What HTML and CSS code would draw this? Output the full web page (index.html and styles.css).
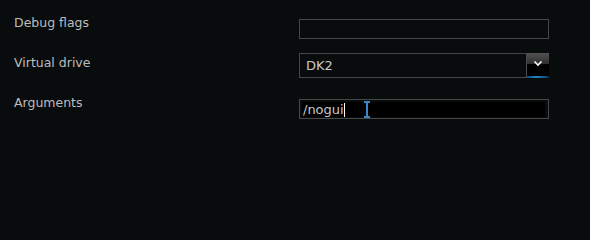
FILE: index.html
```html
<!DOCTYPE html>
<html>
<head>
<meta charset="utf-8">
<link rel="stylesheet" href="styles.css">
</head>
<body>
<div class="form">
  <div class="row">
    <div class="label">Debug flags</div>
    <div class="field input"></div>
  </div>
  <div class="row">
    <div class="label">Virtual drive</div>
    <div class="field select">
      <div class="select-value">DK2</div>
      <div class="select-btn">
        <svg class="chev" width="10" height="7" viewBox="0 0 10 7"><path d="M1.5 1.5 L5 5 L8.5 1.5" fill="none" stroke="#ffffff" stroke-width="1.6"/></svg>
      </div>
    </div>
  </div>
  <div class="row">
    <div class="label">Arguments</div>
    <div class="field input focused">
      <div class="inner"><span class="val">/nogui</span><span class="caret"></span></div>
      <span class="ibeam"></span>
    </div>
  </div>
</div>
</body>
</html>
```
FILE: styles.css
```css
html, body {
  margin: 0;
  padding: 0;
  background: #080c0c;
  width: 590px;
  height: 200px;
  overflow: hidden;
}
body {
  font-family: "DejaVu Sans", sans-serif;
  font-size: 12.5px;
  color: #bdbdbd;
}
.form {
  padding: 14px 0 0 14px;
}
.row {
  display: flex;
  align-items: flex-start;
  height: 40px;
}
.label {
  width: 285px;
  line-height: 16px;
  margin-top: 1px;
}
.field {
  box-sizing: border-box;
  width: 250px;
  border: 1px solid #474747;
  background: #080c0c;
}
.input {
  height: 20px;
  margin-top: 5px;
  position: relative;
}
.select {
  height: 25px;
  margin-top: -1px;
  display: flex;
  border-right: none;
}
.select-value {
  flex: 1;
  padding-left: 6px;
  line-height: 24px;
  font-size: 13px;
  color: #c8c8c8;
}
.select-btn {
  position: relative;
  width: 23px;
  margin: -1px 0 -1px 0;
  border-left: 1px solid #4a4a4a;
  background: linear-gradient(#525252, #2e2e2e 44%, #000000 44%, #000000 100%);
  display: flex;
  justify-content: center;
  padding-top: 7px;
  box-sizing: border-box;
}
.select-btn::after {
  content: "";
  position: absolute;
  left: 0;
  right: 0;
  bottom: 0;
  height: 2px;
  background: linear-gradient(90deg, #0e4a70, #1e86c0 40%, #0f5a88 80%, #06283c);
}
.chev {
  display: block;
}
.inner {
  position: absolute;
  left: 2px;
  top: 2px;
  right: 3px;
  bottom: 1px;
  background: #000000;
  display: flex;
  align-items: center;
  padding-left: 1px;
}
.val {
  font-size: 13px;
  color: #c8c8c8;
  line-height: 15px;
}
.caret {
  display: inline-block;
  width: 1px;
  height: 14px;
  background: #ffffff;
}
.ibeam {
  position: absolute;
  left: 66px;
  top: 1px;
  width: 2px;
  height: 17px;
  background: #3d86c6;
}
.ibeam::before, .ibeam::after {
  content: "";
  position: absolute;
  left: -2px;
  width: 6px;
  height: 2px;
  background: #3d86c6;
}
.ibeam::before { top: 0; }
.ibeam::after { bottom: 0; }
```
